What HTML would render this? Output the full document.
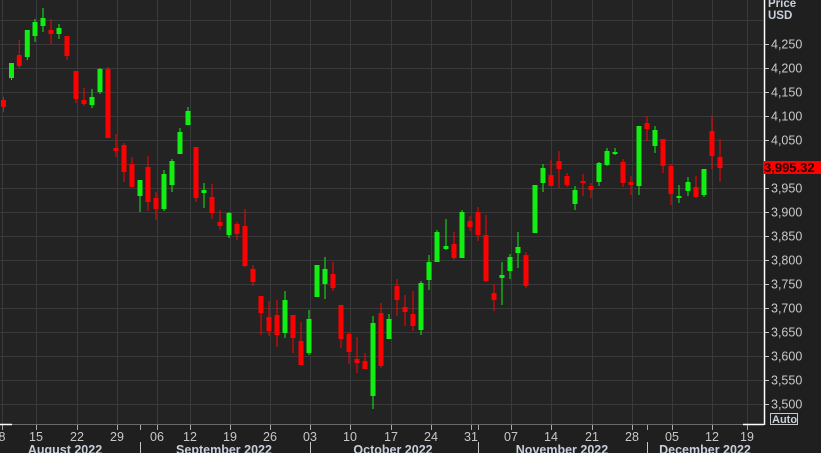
<!DOCTYPE html>
<html><head><meta charset="utf-8"><style>
html,body{margin:0;padding:0;background:#1f1f1f;width:821px;height:453px;overflow:hidden}
svg{display:block}
text{font-family:"Liberation Sans",Tahoma,sans-serif}
</style></head><body>
<svg id="s" width="821" height="453" xmlns="http://www.w3.org/2000/svg">
<rect x="0" y="0" width="821" height="453" fill="#1f1f1f"/>
<rect x="0" y="0" width="763" height="424" fill="#222322"/>
<g id="grid" stroke="#3a3a3a" stroke-width="1"></g>
<g id="c"></g>
<line x1="764.5" y1="0" x2="764.5" y2="425" stroke="#ffffff" stroke-width="1.5"/>
<line x1="0" y1="424.5" x2="764" y2="424.5" stroke="#6a6a6a" stroke-width="1"/>
<line x1="0" y1="424.5" x2="12" y2="424.5" stroke="#ffffff" stroke-width="1.5"/>
<line x1="743" y1="424.5" x2="764" y2="424.5" stroke="#ffffff" stroke-width="1.5"/>
<g id="ax" fill="#c8c8c8" font-size="12.5"></g>
<text x="768" y="7" fill="#c8d0dc" font-size="11.5" font-weight="bold">Price</text>
<text x="768" y="19" fill="#c8d0dc" font-size="11.5" font-weight="bold">USD</text>
<rect x="763" y="161" width="58" height="13" fill="#ff0000"/>
<text x="764" y="172" fill="#200000" font-size="13" font-weight="bold">3,995.32</text>
<rect x="770.5" y="413.5" width="27" height="11" fill="none" stroke="#c8c8c8"/>
<text x="772" y="423" fill="#c8d0dc" font-size="11" font-weight="bold">Auto</text>
</svg>
<script>
var NS="http://www.w3.org/2000/svg";
function el(p,t,a,txt){var e=document.createElementNS(NS,t);for(var k in a)e.setAttribute(k,a[k]);if(txt)e.textContent=txt;p.appendChild(e);return e;}
var g=document.getElementById('grid'),ax=document.getElementById('ax'),c=document.getElementById('c'),s=document.getElementById('s');
for(var p=3500;p<=4300;p+=50){var y=404-(p-3500)*0.48;el(g,'line',{x1:0,x2:763,y1:y+.5,y2:y+.5});
if(p<=4250&&p!=4000){el(ax,'line',{x1:765,x2:769,y1:y+.5,y2:y+.5,stroke:'#c8c8c8'});el(ax,'text',{x:771,y:y+4.5},p.toLocaleString('en-US'));}}
var days=[[2,'8'],[36,'15'],[77,'22'],[117,'29'],[157,'06'],[190,'12'],[230,'19'],[270,'26'],[310,'03'],[350,'10'],[391,'17'],[431,'24'],[471,'31'],[511,'07'],[551,'14'],[592,'21'],[632,'28'],[672,'05'],[712,'12'],[747,'19']];
days.forEach(function(d){el(g,'line',{x1:d[0]+.5,x2:d[0]+.5,y1:0,y2:424});
el(s,'line',{x1:d[0]+.5,x2:d[0]+.5,y1:425,y2:430,stroke:'#aaaaaa'});
el(s,'text',{x:d[0],y:441,'text-anchor':'middle',fill:'#c8c8c8','font-size':12.5},d[1]);});
[140,310,478,647].forEach(function(x){el(s,'line',{x1:x+.5,x2:x+.5,y1:425,y2:430,stroke:'#aaaaaa'});});
[140,310,478,647].forEach(function(x){el(s,'line',{x1:x+.5,x2:x+.5,y1:442,y2:453,stroke:'#c8c8c8'});});
[[65,'August 2022'],[224,'September 2022'],[393,'October 2022'],[562,'November 2022'],[705,'December 2022']].forEach(function(m){
el(s,'text',{x:m[0],y:454,'text-anchor':'middle',fill:'#c8d0dc','font-size':12.5,'font-weight':'bold'},m[1]);});
var d=[
[3.5,97,112,100,107,0],[11.5,63,80,63,78,1],[19.3,40,68,55,66,0],[27.3,30,60,30,57,1],[35,19,42,22,36,1],[43,8,32,18,26,1],[51,19,44,30,34,0],[59,24,39,28,34,1],[67,36,60,36,56,0],[76,71,103,71,99,0],[84,88,106,100,104,0],[92,89,108,97,105,1],[100,68,94,69,92,1],[108,67,138,69,138,0],[116,134,157,148,151,0],[124,143,182,145,172,0],[132,157,187,164,187,0],[140,180,212,180,196,1],[148,156,211,167,202,0],[156,192,220,198,209,0],[164,170,211,174,209,1],[172,159,192,161,185,1],[180,128,154,132,154,1],[188,107,125,111,125,1],[196,147,202,147,198,0],[204,183,208,190,193,1],[212,184,219,197,213,0],[220,210,230,222,226,0],[229,212,238,213,235,1],[237,222,240,224,234,0],
[245,209,267,226,266,0],[253,265,286,269,282,0],[261,296,335,296,313,0],[269,301,336,317,331,0],[277,300,347,315,335,0],[285,291,338,300,333,1],[293,315,353,315,338,0],[301,322,365,341,365,0],[309,310,355,319,353,1],[317,265,297,265,297,1],[325,257,299,269,284,1],[333,262,291,274,288,0],[341,305,348,305,339,0],[349,332,364,334,352,0],[357,337,373,359,363,0],[365,353,369,361,369,0],[373,316,409,323,396,1],[381,303,368,313,366,0],[389,314,339,319,339,1],[397,279,316,286,300,0],[405,295,326,307,312,0],[413,291,331,314,326,0],[421,281,335,283,330,1],[429,255,290,262,280,1],[437,230,262,232,262,1],[446,219,250,246,249,1],[454,232,260,244,258,0],[462,210,258,212,258,1],[470,216,231,221,227,0],[478,207,241,212,235,0],[486,215,282,235,281,0],[494,284,311,293,300,0],[502,262,305,275,278,1],[510,254,279,257,271,1],[518,232,268,247,253,1],[526,252,288,255,286,0],[535,185,233,185,233,1],[543,164,192,168,183,1],[551,160,186,175,186,0],[559,151,188,161,169,0],[567,173,187,176,185,0],[575,186,210,190,204,1],[583,174,196,181,182,0],[591,183,198,186,190,0],[599,162,186,163,182,1],[607,148,166,151,165,1],[615,148,155,152,154,1],[623,159,187,162,183,0],[631,176,195,182,185,0],[639,126,195,126,186,1],[647,116,141,123,129,0],[655,126,153,130,146,1],[663,139,173,139,166,0],[671,164,205,166,194,0],[679,185,203,196,198,1],[688,177,196,182,191,1],[696,176,198,187,197,0],[704,169,197,169,195,1],[712,116,169,131,156,0],[720,139,182,157,168,0]];
d.forEach(function(k){var col=k[5]?'#11ee11':'#ff0000';
el(c,'rect',{x:k[0]-0.5,y:k[1],width:1,height:k[2]-k[1],fill:col});
el(c,'rect',{x:k[0]-2.5,y:k[3],width:5,height:Math.max(2,k[4]-k[3]),fill:col});});
</script>
</body></html>
